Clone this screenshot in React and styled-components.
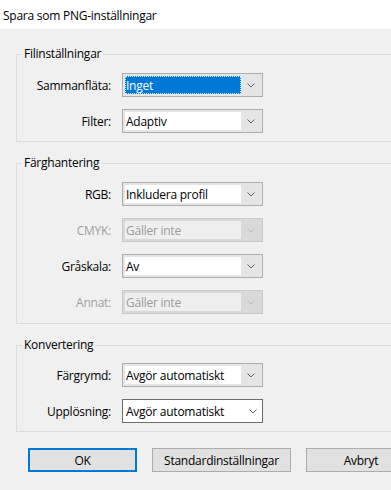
import React from 'react';
import styled, { createGlobalStyle } from 'styled-components';

const GlobalStyle = createGlobalStyle`
  html, body {
    margin: 0;
    padding: 0;
    background: #f0f0f0;
  }
  body {
    font-family: "Open Sans", "Noto Sans", sans-serif;
    font-size: 12px;
    letter-spacing: -0.25px;
    color: #000;
  }
`;

const Dialog = styled.div`
  width: 391px;
  height: 490px;
  overflow: hidden;
  display: flex;
  flex-direction: column;
  background: #f0f0f0;
`;

const TitleBar = styled.div`
  height: 29px;
  flex-shrink: 0;
  background: #fff;
  display: flex;
  align-items: center;
  padding: 1px 0 0 3px;
  box-sizing: border-box;
  font-size: 12px;
`;

const Body = styled.div`
  display: flex;
  flex-direction: column;
  gap: 13px;
  padding: 17px 0 0 16px;
`;

const Group = styled.fieldset`
  width: 420px;
  box-sizing: border-box;
  margin: 0;
  padding: ${p => p.$padTop}px 0 ${p => p.$padBottom}px 0;
  border: 1px solid #dcdcdc;
  border-radius: 0;
  min-width: 0;
`;

const Legend = styled.legend`
  margin-left: 5px;
  padding: 0 2px;
  font-size: 12px;
  line-height: 16px;
`;

const Rows = styled.div`
  display: grid;
  grid-template-columns: 94px 141px;
  column-gap: 11px;
  row-gap: ${p => p.$gap || 12}px;
  align-items: center;
`;

const Label = styled.span`
  text-align: right;
  color: ${p => (p.$disabled ? '#a0a0a0' : '#000')};
`;

const Combo = styled.div`
  height: 24px;
  box-sizing: border-box;
  display: flex;
  padding: ${p => (p.$open ? '0' : '2px')};
  border: 1px solid ${p => (p.$disabled ? '#cacaca' : p.$open ? '#6e6e6e' : '#adadad')};
  background: ${p => (p.$disabled ? '#d9d9d9' : p.$open ? '#fff' : '#e5e5e5')};
`;

const Field = styled.div`
  flex: 1;
  display: flex;
  align-items: center;
  padding-left: ${p => (p.$open ? '3px' : '1px')};
  background: ${p => (p.$selected ? '#0078d7' : p.$disabled ? '#efefef' : '#fff')};
  color: ${p => (p.$selected ? '#fff' : p.$disabled ? '#9b9b9b' : '#000')};
  outline: ${p => (p.$selected ? '1px dotted #cfe4f7' : 'none')};
  outline-offset: -1px;
  white-space: nowrap;
`;

const Arrow = styled.div`
  width: 19px;
  display: flex;
  align-items: center;
  justify-content: center;
`;

const Buttons = styled.div`
  display: flex;
  gap: 15px;
  padding: 16px 0 0 28px;
`;

const Button = styled.button`
  flex-shrink: 0;
  width: ${p => p.$w}px;
  height: 24px;
  box-sizing: border-box;
  margin: 0;
  padding: 0;
  background: #e1e1e1;
  border: ${p => (p.$default ? '2px solid #0078d7' : '1px solid #adadad')};
  border-radius: 0;
  font-family: inherit;
  font-size: 12px;
  letter-spacing: inherit;
  color: #000;
`;

const Chevron = ({ disabled }) => (
  <svg width="8" height="5" viewBox="0 0 8 5">
    <polyline
      points="0.5,0.5 4,4 7.5,0.5"
      fill="none"
      stroke={disabled ? '#bcbcbc' : '#606060'}
      strokeWidth="1"
    />
  </svg>
);

const Select = ({ label, value, disabled, selected, open }) => (
  <>
    <Label $disabled={disabled}>{label}</Label>
    <Combo $disabled={disabled} $open={open}>
      <Field $selected={selected} $disabled={disabled} $open={open}>{value}</Field>
      <Arrow>
        <Chevron disabled={disabled} />
      </Arrow>
    </Combo>
  </>
);

export default function App() {
  return (
    <Dialog>
      <GlobalStyle />
      <TitleBar>Spara som PNG-inställningar</TitleBar>
      <Body>
        <Group $padTop={11} $padBottom={8}>
          <Legend>Filinställningar</Legend>
          <Rows>
            <Select label="Sammanfläta:" value="Inget" selected />
            <Select label="Filter:" value="Adaptiv" />
          </Rows>
        </Group>
        <Group $padTop={11} $padBottom={9}>
          <Legend>Färghantering</Legend>
          <Rows>
            <Select label="RGB:" value="Inkludera profil" />
            <Select label="CMYK:" value="Gäller inte" disabled />
            <Select label="Gråskala:" value="Av" />
            <Select label="Annat:" value="Gäller inte" disabled />
          </Rows>
        </Group>
        <Group $padTop={10} $padBottom={8}>
          <Legend>Konvertering</Legend>
          <Rows $gap={12}>
            <Select label="Färgrymd:" value="Avgör automatiskt" />
            <Select label="Upplösning:" value="Avgör automatiskt" open />
          </Rows>
        </Group>
      </Body>
      <Buttons>
        <Button $w={109} $default>OK</Button>
        <Button $w={139}>Standardinställningar</Button>
        <Button $w={110}>Avbryt</Button>
      </Buttons>
    </Dialog>
  );
}
